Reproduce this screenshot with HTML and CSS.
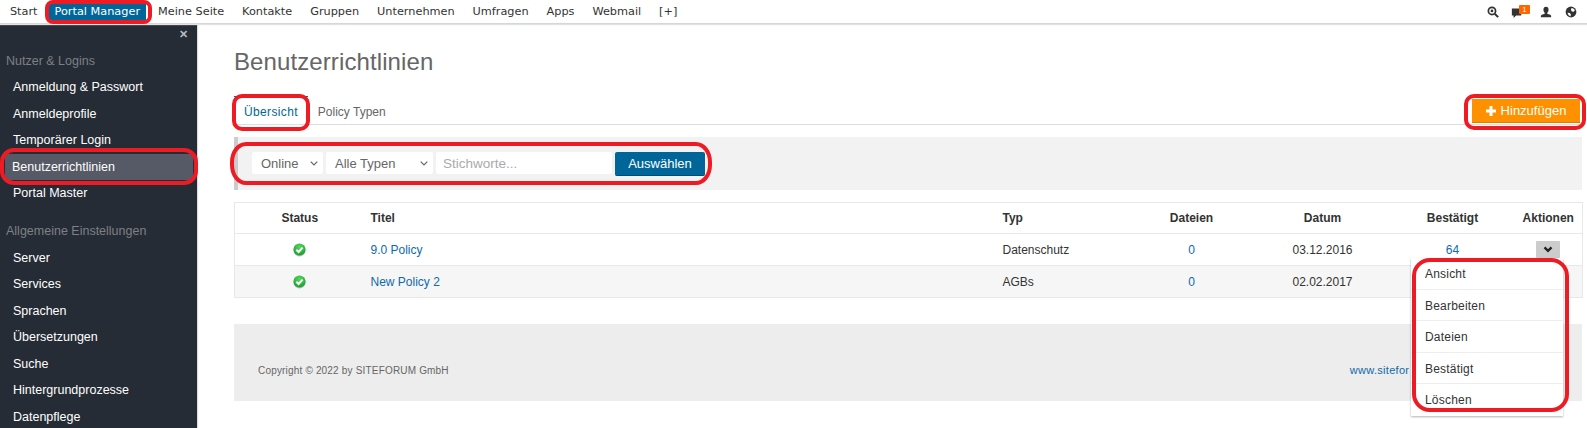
FILE: index.html
```html
<!DOCTYPE html>
<html lang="de">
<head>
<meta charset="utf-8">
<title>Benutzerrichtlinien</title>
<link rel="stylesheet" href="styles.css">
</head>
<body>
<svg class="defs" width="0" height="0" aria-hidden="true">
  <defs>
    <radialGradient id="okfill" cx="50%" cy="30%" r="75%">
      <stop offset="0" stop-color="#55d95f"/>
      <stop offset="1" stop-color="#129a2a"/>
    </radialGradient>
  </defs>
</svg>
<header class="topbar">
  <nav class="topnav">
    <a class="topnav-item">Start</a>
    <a class="topnav-item is-active">Portal Manager</a>
    <a class="topnav-item">Meine Seite</a>
    <a class="topnav-item">Kontakte</a>
    <a class="topnav-item">Gruppen</a>
    <a class="topnav-item">Unternehmen</a>
    <a class="topnav-item">Umfragen</a>
    <a class="topnav-item">Apps</a>
    <a class="topnav-item">Webmail</a>
    <a class="topnav-item">[+]</a>
  </nav>
  <div class="topicons">
    <svg class="ticon ticon-search" viewBox="0 0 14 14"><circle cx="5.800" cy="5.800" r="4.200" fill="none" stroke="#333" stroke-width="2"/><circle cx="5.800" cy="5.800" r="1.600" fill="#333"/><path d="M9 9l4 4" stroke="#333" stroke-width="2.400"/></svg>
    <span class="msg">
      <svg class="ticon" viewBox="0 0 14 14"><path d="M1 3h11v8H6l-3 3v-3H1z" fill="#333"/></svg>
      <span class="msg-badge">1</span>
    </span>
    <svg class="ticon ticon-user" viewBox="0 0 14 14"><path d="M7 1c2 0 3 1.400 3 3.400 0 1.500-.7 2.800-1.500 3.400v1.100c1.800.6 4.500 1.100 4.500 2.600v1.500H1v-1.500c0-1.500 2.700-2 4.500-2.600V7.800C4.700 7.200 4 5.900 4 4.400 4 2.400 5 1 7 1z" fill="#333"/></svg>
    <svg class="ticon" viewBox="0 0 14 14"><circle cx="7" cy="7" r="6.300" fill="#333"/><path d="M7.500 2.200c1.800.2 3.500 1.300 4 3l-1.500 1.600-2-.5-1-1.500zM3 8l2.500.3 1.500 1.700-.8 2.200C4.500 11.600 3.400 10 3 8z" fill="#fff"/></svg>
  </div>
</header>

<div class="layout">
  <aside class="sidebar">
    <div class="side-close">✕</div>
    <h2 class="side-title">Nutzer &amp; Logins</h2>
    <a class="side-item">Anmeldung &amp; Passwort</a>
    <a class="side-item">Anmeldeprofile</a>
    <a class="side-item">Temporärer Login</a>
    <a class="side-item is-active">Benutzerrichtlinien</a>
    <a class="side-item">Portal Master</a>
    <h2 class="side-title side-title-second">Allgemeine Einstellungen</h2>
    <a class="side-item">Server</a>
    <a class="side-item">Services</a>
    <a class="side-item">Sprachen</a>
    <a class="side-item">Übersetzungen</a>
    <a class="side-item">Suche</a>
    <a class="side-item">Hintergrundprozesse</a>
    <a class="side-item">Datenpflege</a>
  </aside>

  <main class="main">
    <h1 class="page-title">Benutzerrichtlinien</h1>

    <div class="tabs">
      <a class="tab is-active">Übersicht</a>
      <a class="tab">Policy Typen</a>
      <button class="add-btn"><svg class="add-plus" viewBox="0 0 10 10"><path d="M5 0v10M0 5h10" stroke="#fff" stroke-width="3"/></svg>Hinzufügen</button>
    </div>

    <form class="filter">
      <span class="select-wrap select-status">
        <select class="control"><option>Online</option></select>
        <svg class="chev" viewBox="0 0 8 5"><path d="M.7.7L4 4l3.300-3.300" fill="none" stroke="#666" stroke-width="1.200"/></svg>
      </span>
      <span class="select-wrap select-type">
        <select class="control"><option>Alle Typen</option></select>
        <svg class="chev" viewBox="0 0 8 5"><path d="M.7.7L4 4l3.300-3.300" fill="none" stroke="#666" stroke-width="1.200"/></svg>
      </span>
      <input class="control keyword" placeholder="Stichworte...">
      <button type="button" class="submit">Auswählen</button>
    </form>

    <table class="policies">
      <colgroup>
        <col class="c-status"><col class="c-title"><col class="c-type"><col class="c-files"><col class="c-date"><col class="c-conf"><col class="c-act">
      </colgroup>
      <thead>
        <tr>
          <th>Status</th><th class="left">Titel</th><th class="left">Typ</th><th>Dateien</th><th>Datum</th><th>Bestätigt</th><th class="act-cell">Aktionen</th>
        </tr>
      </thead>
      <tbody>
        <tr>
          <td><svg class="ok" viewBox="0 0 14 14"><circle cx="7" cy="7" r="6.500" fill="url(#okfill)"/><path d="M3.600 7.200l2.400 2.400 4.400-4.600" fill="none" stroke="#fff" stroke-width="2.200"/></svg></td>
          <td class="left"><a class="lnk">9.0 Policy</a></td>
          <td class="left">Datenschutz</td>
          <td><a class="lnk">0</a></td>
          <td>03.12.2016</td>
          <td><a class="lnk">64</a></td>
          <td class="act-cell"><span class="act-btn"><svg viewBox="0 0 12 8" class="act-chev"><path d="M1.800 1.500L6 5.700l4.200-4.200" fill="none" stroke="#222" stroke-width="2.800"/></svg></span></td>
        </tr>
        <tr class="alt">
          <td><svg class="ok" viewBox="0 0 14 14"><circle cx="7" cy="7" r="6.500" fill="url(#okfill)"/><path d="M3.600 7.200l2.400 2.400 4.400-4.600" fill="none" stroke="#fff" stroke-width="2.200"/></svg></td>
          <td class="left"><a class="lnk">New Policy 2</a></td>
          <td class="left">AGBs</td>
          <td><a class="lnk">0</a></td>
          <td>02.02.2017</td>
          <td></td>
          <td class="act-cell"></td>
        </tr>
      </tbody>
    </table>

    <footer class="footer">
      <span class="copyright">Copyright © 2022 by SITEFORUM GmbH</span>
      <a class="footer-link">www.sitefor</a>
    </footer>
  </main>
</div>

<ul class="menu">
  <li>Ansicht</li>
  <li>Bearbeiten</li>
  <li>Dateien</li>
  <li>Bestätigt</li>
  <li>Löschen</li>
</ul>

<div class="mark mark-portal"></div>
<div class="mark mark-side"></div>
<div class="mark mark-tab"></div>
<div class="mark mark-add"></div>
<div class="mark mark-filter"></div>
<div class="mark mark-menu"></div>
</body>
</html>
```

FILE: styles.css
```css
* { box-sizing: border-box; }
html, body { margin: 0; height: 428px; overflow: hidden; background: #fff; }
body { font-family: "Liberation Sans", Arial, sans-serif; font-size: 12px; color: #333; position: relative; }
.defs { position: absolute; }

.topbar { height: 24px; display: flex; align-items: center; justify-content: space-between; padding: 1px 10px 0 1px; background: #fff; border-bottom: 1px solid #d6d6d6; box-shadow: 0 1px 1px #e2e2e2; position: relative; z-index: 2; }
.topnav { display: flex; align-items: center; font-family: "DejaVu Sans", Verdana, sans-serif; font-size: 11.300px; color: #333; }
.topnav-item { padding: 0 8.950px; line-height: 16px; white-space: nowrap; }
.topnav-item.is-active { background: #006699; color: #fff; padding: 0 6px; margin: 0 3px 0 2px; }
.topicons { display: flex; align-items: center; }
.ticon { width: 12px; height: 12px; display: block; }
.ticon-search { margin-right: 12px; }
.ticon-user { margin-right: 13px; }
.msg { position: relative; display: block; margin-right: 17px; }
.msg-badge { position: absolute; left: 8px; top: -1px; width: 11px; height: 9px; background: #f60; color: #fff; font-size: 7px; line-height: 9px; text-align: center; border-radius: 1px; }

.layout { display: flex; height: 404px; }
.sidebar { width: 197px; flex: none; background: #262c35; box-shadow: 1px 0 1px #ddd; position: relative; padding-top: 28px; color: #fff; font-size: 12.500px; }
.side-close { position: absolute; right: 9px; top: 3px; font-size: 11px; line-height: 14px; font-weight: bold; color: #b5b8bd; }
.side-title { margin: 0; font-weight: normal; font-size: 12.500px; line-height: 18px; color: #7d8084; padding-left: 6px; }
.side-title-second { margin-top: 15px; }
.side-item { display: block; height: 26.500px; line-height: 26.500px; padding-left: 13px; white-space: nowrap; }
.side-title + .side-item { margin-top: 4px; }
.side-title-second + .side-item { margin-top: 5px; }
.side-item.is-active { background: #555a66; margin: 0 4px 0 5px; padding-left: 7px; }

.main { flex: 1; padding: 0 5px 0 37px; min-width: 0; }
.page-title { margin: 24px 0 0; height: 28px; font-weight: normal; font-size: 24px; letter-spacing: .1px; line-height: 28px; color: #666; }
.tabs { margin-top: 20px; height: 29px; display: flex; align-items: flex-end; border-bottom: 1px solid #ddd; position: relative; }
.tab { height: 28px; line-height: 31px; padding: 0 10px; color: #666; border-top: 1px solid transparent; }
.tab.is-active { color: #006699; border-top: 1px solid #006699; letter-spacing: .35px; }
.add-btn { margin-left: auto; margin-right: 2px; height: 24px; width: 108px; margin-bottom: 1px; border: 0; border-bottom: 1px solid #d87f00; background: #ff9100; color: #fff; font: 13px/22px "Liberation Sans", Arial, sans-serif; padding: 0; display: flex; align-items: center; justify-content: center; gap: 5px; }
.add-plus { width: 10px; height: 10px; display: block; }

.filter { margin-top: 12px; height: 53px; background: #f2f2f2; border-left: 4px solid #ccc; padding: 15px 0 0 14px; display: flex; align-items: flex-start; gap: 3px; }
.control { height: 22px; border: 0; background: #fff; border-radius: 2px; font: 13px "Liberation Sans", Arial, sans-serif; color: #666; padding: 0 9px; outline: 0; appearance: none; -webkit-appearance: none; width: 100%; display: block; }
.select-wrap { position: relative; display: block; }
.select-status { width: 71px; }
.select-type { width: 107px; }
.chev { position: absolute; right: 5px; top: 9px; width: 8px; height: 5px; }
.keyword { width: 176px; flex: none; font-size: 13.500px; padding-left: 7px; }
.keyword::placeholder { color: #aaa; opacity: 1; }
.submit { width: 90px; height: 24px; border: 0; border-bottom: 1px solid #004c73; background: #006699; color: #fff; font: 13px "Liberation Sans", Arial, sans-serif; border-radius: 2px; padding: 0; }

.policies { margin-top: 12px; width: 1348px; table-layout: fixed; border-collapse: collapse; border: 1px solid #e8e8e8; font-size: 12px; }
.c-status { width: 130px; } .c-title { width: 632px; } .c-type { width: 124px; } .c-files { width: 142px; } .c-date { width: 120px; } .c-conf { width: 140px; } .c-act { width: 60px; }
.policies th { height: 31px; font-weight: bold; text-align: center; padding: 0; color: #333; }
.policies td { height: 32px; text-align: center; padding: 0; border-top: 1px solid #e8e8e8; color: #333; }
.policies .left { text-align: left; padding-left: 6px; }
.policies .act-cell { padding-right: 8px; white-space: nowrap; }
.alt td { background: #f6f6f6; }
.lnk { color: #0f6aa8; }
.ok { width: 13px; height: 13px; display: block; margin: 0 auto; filter: drop-shadow(0 1px 0 #bbb); }
.act-btn { display: block; width: 24px; height: 17px; background: #ccc; margin: 0 auto; position: relative; border-radius: 1px; }
.act-chev { position: absolute; left: 7px; top: 5px; width: 10px; height: 7px; }

.footer { margin-top: 26px; height: 77px; background: #ededed; display: flex; align-items: center; font-size: 10px; color: #666; padding: 15px 0 0 24px; }
.copyright { letter-spacing: .18px; }
.footer-link { margin-left: 901px; color: #0f6aa8; font-size: 11px; white-space: nowrap; letter-spacing: .3px; }

.menu { position: absolute; left: 1411px; top: 258px; width: 152px; margin: 0; padding: 0; list-style: none; background: #fff; box-shadow: 0 1px 2px rgba(0,0,0,.3); z-index: 3; font-size: 12px; letter-spacing: .2px; color: #333; }
.menu li { height: 31.500px; line-height: 32px; padding-left: 14px; border-bottom: 1px solid #eee; }
.menu li:last-child { border-bottom: 0; }

.mark { position: absolute; border: 4px solid #ed1c24; z-index: 4; pointer-events: none; }
.mark-portal { left: 45px; top: 0; width: 107px; height: 24px; border-radius: 8px; }
.mark-side { left: 0; top: 148px; width: 198px; height: 37px; border-radius: 14px; }
.mark-tab { left: 232px; top: 94px; width: 78px; height: 37px; border-radius: 10px; }
.mark-add { left: 1464px; top: 94px; width: 122px; height: 36px; border-radius: 10px; }
.mark-filter { left: 230px; top: 142px; width: 482px; height: 43px; border-radius: 16px / 20px; }
.mark-menu { left: 1412px; top: 258px; width: 157px; height: 154px; border-radius: 18px; }
```
